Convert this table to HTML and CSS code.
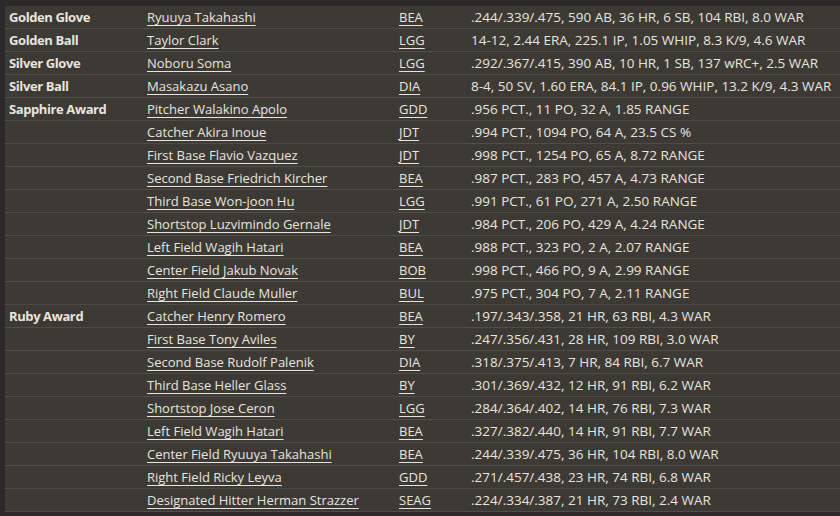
FILE: index.html
```html
<!DOCTYPE html>
<html>
<head>
<meta charset="utf-8">
<link rel="stylesheet" href="styles.css">
</head>
<body>
<div class="wrap">
<table class="awards">
<colgroup><col class="c1"><col class="c2"><col class="c3"><col class="c4"></colgroup>
<tbody>
<tr><th>Golden Glove</th><td><a href="#">Ryuuya Takahashi</a></td><td><a href="#">BEA</a></td><td class="stats">.244/.339/.475, 590 AB, 36 HR, 6 SB, 104 RBI, 8.0 WAR</td></tr>
<tr><th>Golden Ball</th><td><a href="#">Taylor Clark</a></td><td><a href="#">LGG</a></td><td class="stats">14-12, 2.44 ERA, 225.1 IP, 1.05 WHIP, 8.3 K/9, 4.6 WAR</td></tr>
<tr><th>Silver Glove</th><td><a href="#">Noboru Soma</a></td><td><a href="#">LGG</a></td><td class="stats">.292/.367/.415, 390 AB, 10 HR, 1 SB, 137 wRC+, 2.5 WAR</td></tr>
<tr><th>Silver Ball</th><td><a href="#">Masakazu Asano</a></td><td><a href="#">DIA</a></td><td class="stats">8-4, 50 SV, 1.60 ERA, 84.1 IP, 0.96 WHIP, 13.2 K/9, 4.3 WAR</td></tr>
<tr><th>Sapphire Award</th><td><a href="#">Pitcher Walakino Apolo</a></td><td><a href="#">GDD</a></td><td class="stats">.956 PCT., 11 PO, 32 A, 1.85 RANGE</td></tr>
<tr><th></th><td><a href="#">Catcher Akira Inoue</a></td><td><a href="#">JDT</a></td><td class="stats">.994 PCT., 1094 PO, 64 A, 23.5 CS %</td></tr>
<tr><th></th><td><a href="#">First Base Flavio Vazquez</a></td><td><a href="#">JDT</a></td><td class="stats">.998 PCT., 1254 PO, 65 A, 8.72 RANGE</td></tr>
<tr><th></th><td><a href="#">Second Base Friedrich Kircher</a></td><td><a href="#">BEA</a></td><td class="stats">.987 PCT., 283 PO, 457 A, 4.73 RANGE</td></tr>
<tr><th></th><td><a href="#">Third Base Won-joon Hu</a></td><td><a href="#">LGG</a></td><td class="stats">.991 PCT., 61 PO, 271 A, 2.50 RANGE</td></tr>
<tr><th></th><td><a href="#">Shortstop Luzvimindo Gernale</a></td><td><a href="#">JDT</a></td><td class="stats">.984 PCT., 206 PO, 429 A, 4.24 RANGE</td></tr>
<tr><th></th><td><a href="#">Left Field Wagih Hatari</a></td><td><a href="#">BEA</a></td><td class="stats">.988 PCT., 323 PO, 2 A, 2.07 RANGE</td></tr>
<tr><th></th><td><a href="#">Center Field Jakub Novak</a></td><td><a href="#">BOB</a></td><td class="stats">.998 PCT., 466 PO, 9 A, 2.99 RANGE</td></tr>
<tr><th></th><td><a href="#">Right Field Claude Muller</a></td><td><a href="#">BUL</a></td><td class="stats">.975 PCT., 304 PO, 7 A, 2.11 RANGE</td></tr>
<tr><th>Ruby Award</th><td><a href="#">Catcher Henry Romero</a></td><td><a href="#">BEA</a></td><td class="stats">.197/.343/.358, 21 HR, 63 RBI, 4.3 WAR</td></tr>
<tr><th></th><td><a href="#">First Base Tony Aviles</a></td><td><a href="#">BY</a></td><td class="stats">.247/.356/.431, 28 HR, 109 RBI, 3.0 WAR</td></tr>
<tr><th></th><td><a href="#">Second Base Rudolf Palenik</a></td><td><a href="#">DIA</a></td><td class="stats">.318/.375/.413, 7 HR, 84 RBI, 6.7 WAR</td></tr>
<tr><th></th><td><a href="#">Third Base Heller Glass</a></td><td><a href="#">BY</a></td><td class="stats">.301/.369/.432, 12 HR, 91 RBI, 6.2 WAR</td></tr>
<tr><th></th><td><a href="#">Shortstop Jose Ceron</a></td><td><a href="#">LGG</a></td><td class="stats">.284/.364/.402, 14 HR, 76 RBI, 7.3 WAR</td></tr>
<tr><th></th><td><a href="#">Left Field Wagih Hatari</a></td><td><a href="#">BEA</a></td><td class="stats">.327/.382/.440, 14 HR, 91 RBI, 7.7 WAR</td></tr>
<tr><th></th><td><a href="#">Center Field Ryuuya Takahashi</a></td><td><a href="#">BEA</a></td><td class="stats">.244/.339/.475, 36 HR, 104 RBI, 8.0 WAR</td></tr>
<tr><th></th><td><a href="#">Right Field Ricky Leyva</a></td><td><a href="#">GDD</a></td><td class="stats">.271/.457/.438, 23 HR, 74 RBI, 6.8 WAR</td></tr>
<tr><th></th><td><a href="#">Designated Hitter Herman Strazzer</a></td><td><a href="#">SEAG</a></td><td class="stats">.224/.334/.387, 21 HR, 73 RBI, 2.4 WAR</td></tr>
</tbody>
</table>
</div>
</body>
</html>
```
FILE: styles.css
```css
html, body {
  margin: 0;
  padding: 0;
  background: #2c2a28;
}
body {
  width: 840px;
  height: 516px;
  overflow: hidden;
}
.wrap {
  padding: 6px 0 0 5px;
}
.awards {
  border-collapse: collapse;
  table-layout: fixed;
  width: 835px;
  background: #3d3a36;
  font-family: "Open Sans", "Noto Sans", sans-serif;
  font-size: 13px;
  color: #e8e4de;
}
.c1 { width: 138px; }
.c2 { width: 252px; }
.c3 { width: 72px; }
.c4 { width: 373px; }
.awards th,
.awards td {
  height: 21px;
  padding: 1px 0 0 4px;
  border-bottom: 1px solid #504c47;
  white-space: nowrap;
  overflow: hidden;
  text-align: left;
  vertical-align: middle;
  line-height: 21px;
}
.awards th {
  font-weight: bold;
  letter-spacing: -0.4px;
}
.awards .stats {
  font-size: 13.5px;
}
.awards a {
  color: #e8e4de;
  text-decoration: underline;
  text-underline-offset: 3px;
}
```
